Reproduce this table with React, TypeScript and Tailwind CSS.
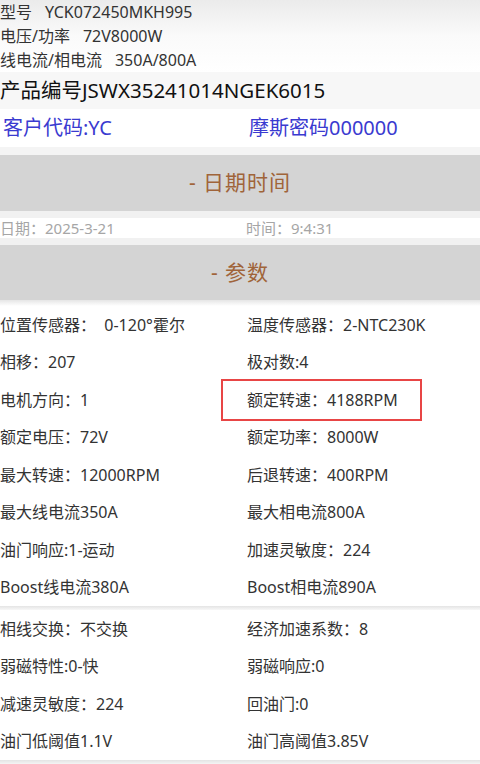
import React from "react";

const font = { fontFamily: '"Noto Sans", "Noto Sans CJK SC", sans-serif' };

const rows1: [string, string][] = [
  ["位置传感器：  0-120°霍尔", "温度传感器：2-NTC230K"],
  ["相移：207", "极对数:4"],
  ["电机方向：1", "额定转速：4188RPM"],
  ["额定电压：72V", "额定功率：8000W"],
  ["最大转速：12000RPM", "后退转速：400RPM"],
  ["最大线电流350A", "最大相电流800A"],
  ["油门响应:1-运动", "加速灵敏度：224"],
  ["Boost线电流380A", "Boost相电流890A"],
];

const rows2: [string, string][] = [
  ["相线交换：不交换", "经济加速系数：8"],
  ["弱磁特性:0-快", "弱磁响应:0"],
  ["减速灵敏度：224", "回油门:0"],
  ["油门低阈值1.1V", "油门高阈值3.85V"],
];

function Grid({ rows, mark }: { rows: [string, string][]; mark?: number }) {
  return (
    <div className="grid grid-cols-[247px_1fr]">
      {rows.map(([a, b], i) => (
        <React.Fragment key={i}>
          <div className="h-[37.5px] flex items-center text-[16px] text-[#333] whitespace-pre">{a}</div>
          <div className="h-[37.5px] flex items-center text-[16px] text-[#333] relative">
            {b}
            {mark === i && (
              <div className="absolute left-[-26px] top-[-2px] w-[201px] h-[42px] border-2 border-[#e84545]" />
            )}
          </div>
        </React.Fragment>
      ))}
    </div>
  );
}

export default function App() {
  return (
    <div className="w-[480px] h-[764px] overflow-hidden bg-white" style={font}>
      <div className="bg-gradient-to-b from-[#ebebeb] via-[#fafafa] to-white">
        <div className="h-[24px] flex items-center text-[16px] text-[#333]">
          <span>型号</span>
          <span className="ml-[13px]">YCK072450MKH995</span>
        </div>
        <div className="h-[24px] flex items-center text-[16px] text-[#333]">
          <span>电压/功率</span>
          <span className="ml-[13px]">72V8000W</span>
        </div>
        <div className="h-[24px] flex items-center text-[16px] text-[#333]">
          <span>线电流/相电流</span>
          <span className="ml-[13px]">350A/800A</span>
        </div>
      </div>
      <div className="h-[37px] flex items-center bg-[#f7f7f7] text-[20.5px] text-[#111]">
        产品编号JSWX35241014NGEK6015
      </div>
      <div className="h-[38px] flex items-center text-[20px] text-[#3a3ad0] bg-white">
        <span className="w-[249px] pl-[3px]">客户代码:YC</span>
        <span>摩斯密码000000</span>
      </div>
      <div className="h-[8px] bg-[#f4f4f4]" />
      <div className="h-[56px] flex items-center justify-center bg-[#d4d4d4] text-[21px] text-[#a0643a] tracking-[1px]">
        -&nbsp;日期时间
      </div>
      <div className="h-[7px] bg-[#f1f1f1]" />
      <div className="h-[20px] flex items-center text-[15px] text-[#a6a6a6]">
        <span className="w-[246px]">日期：2025-3-21</span>
        <span>时间：9:4:31</span>
      </div>
      <div className="h-[7px] bg-[#f1f1f1]" />
      <div className="h-[55px] flex items-center justify-center bg-[#d4d4d4] text-[21px] text-[#a0643a] tracking-[1px]">
        -&nbsp;参数
      </div>
      <div className="h-[6px] bg-gradient-to-b from-[#e6e6e6] to-white" />
      <Grid rows={rows1} mark={2} />
      <div className="h-[4px] bg-gradient-to-b from-[#e4e4e4] to-[#f8f8f8]" />
      <Grid rows={rows2} />
      <div className="h-[5px] bg-gradient-to-b from-[#e4e4e4] to-[#f8f8f8]" />
    </div>
  );
}
